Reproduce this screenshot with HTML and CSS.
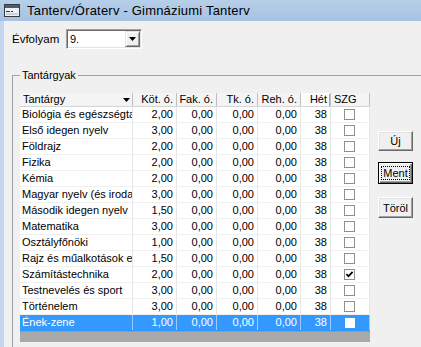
FILE: index.html
```html
<!DOCTYPE html>
<html lang="hu">
<head>
    <meta charset="UTF-8">
    <title>Tanterv/Óraterv - Gimnáziumi Tanterv</title>
    <link rel="stylesheet" href="styles.css">
</head>
<body>
<div class="titlebar">
    <svg class="app-icon" width="16" height="13" viewBox="0 0 16 13">
        <rect x="0.5" y="0.5" width="15" height="12" fill="#fff" stroke="#3a3a3a"/>
        <rect x="1" y="1" width="14" height="3" fill="#4a5a78"/>
        <rect x="1" y="4" width="14" height="8" fill="#eef1f5"/>
        <rect x="2" y="7" width="4" height="1" fill="#333"/>
        <rect x="7" y="7" width="2" height="1" fill="#333"/>
        <rect x="2" y="9" width="12" height="2" fill="#c9d3de"/>
    </svg>
    <span class="title">Tanterv/Óraterv - Gimnáziumi Tanterv</span>
</div>

<div class="client">
    <div class="year-row">
        <label class="year-label">Évfolyam</label>
        <div class="combo">
            <span class="combo-text">9.</span>
            <span class="combo-btn">
                <svg width="7" height="4" viewBox="0 0 7 4"><path d="M0 0h7L3.5 4z" fill="#000"/></svg>
            </span>
        </div>
    </div>

    <fieldset class="group">
        <legend>Tantárgyak</legend>
        <div class="group-body">
            <div class="grid">
                <div class="row head">
                    <div class="cell left">Tantárgy<svg class="sort" width="7" height="4" viewBox="0 0 7 4"><path d="M0 0h7L3.5 4z" fill="#000"/></svg></div>
                    <div class="cell">Köt. ó.</div>
                    <div class="cell">Fak. ó.</div>
                    <div class="cell">Tk. ó.</div>
                    <div class="cell">Reh. ó.</div>
                    <div class="cell hot">Hét</div>
                    <div class="cell left">SZG</div>
                </div>
                <div id="rows"></div>
                <div class="grid-footer"></div>
            </div>
            <div class="actions">
                <button class="btn btn-new">Új</button>
                <button class="btn btn-default"><span class="focus">Ment</span></button>
                <button class="btn btn-del">Töröl</button>
            </div>
        </div>
    </fieldset>
</div>

<script>
    var subjects = [
        ['Biológia és egészségtan', '2,00', false],
        ['Első idegen nyelv', '3,00', false],
        ['Földrajz', '2,00', false],
        ['Fizika', '2,00', false],
        ['Kémia', '2,00', false],
        ['Magyar nyelv (és irodalom)', '3,00', false],
        ['Második idegen nyelv', '1,50', false],
        ['Matematika', '3,00', false],
        ['Osztályfőnöki', '1,00', false],
        ['Rajz és műalkotások elemzése', '1,50', false],
        ['Számítástechnika', '2,00', true],
        ['Testnevelés és sport', '3,00', false],
        ['Történelem', '3,00', false],
        ['Ének-zene', '1,00', false]
    ];

    var html = '';
    subjects.forEach(function (s, i) {
        var cls = (i === subjects.length - 1) ? 'row selected' : 'row';
        var tick = s[2] ? '<svg width="9" height="9" viewBox="0 0 9 9"><path d="M1.5 4.2 3.5 6.3 7.6 1.8" fill="none" stroke="#000" stroke-width="1.8"/></svg>' : '';
        html += '<div class="' + cls + '">' +
            '<div class="cell left">' + s[0] + '</div>' +
            '<div class="cell">' + s[1] + '</div>' +
            '<div class="cell">0,00</div>' +
            '<div class="cell">0,00</div>' +
            '<div class="cell">0,00</div>' +
            '<div class="cell">38</div>' +
            '<div class="cell center"><span class="check">' + tick + '</span></div>' +
            '</div>';
    });
    document.getElementById('rows').innerHTML = html;
</script>
</body>
</html>
```

FILE: styles.css
```css
* {
    box-sizing: border-box;
}

body {
    margin: 0;
    width: 421px;
    height: 347px;
    overflow: hidden;
    background: #f0f0f0;
    font-family: 'Liberation Sans', Arial, sans-serif;
    font-size: 11px;
    color: #000;
}

.titlebar {
    height: 21px;
    display: flex;
    align-items: center;
    padding-left: 4px;
    background: linear-gradient(#b6cfea, #a6c2e3);
}

.app-icon {
    display: block;
    margin-right: 7px;
}

.title {
    font-size: 13px;
    letter-spacing: 0.2px;
    color: #000;
}

.client {
    height: 326px;
    border-left: 4px solid #c3d6ed;
    padding: 8px 0 0 8px;
}

.year-row {
    display: flex;
    align-items: center;
    height: 20px;
}

.year-label {
    width: 54px;
    font-size: 11.5px;
}

.combo {
    width: 76px;
    height: 20px;
    display: flex;
    align-items: center;
    padding: 2px 1px 2px 3px;
    background: #fff;
    border: 1px solid;
    border-color: #a0a0a0 #fff #fff #a0a0a0;
    box-shadow: inset 1px 1px #696969, inset -1px -1px #e3e3e3;
}

.combo-text {
    flex: 1;
}

.combo-btn {
    width: 15px;
    height: 16px;
    display: flex;
    align-items: center;
    justify-content: center;
    background: #f0f0f0;
    border: 1px solid;
    border-color: #e3e3e3 #696969 #696969 #e3e3e3;
    box-shadow: inset 1px 1px #fff, inset -1px -1px #a0a0a0;
}

/* group box runs past the window's right and bottom edge */
.group {
    margin: 19px 0 0 0;
    width: 409px;
    height: 279px;
    padding: 11px 0 0 7px;
    border: 1px solid #a0a0a0;
    border-right: none;
    border-bottom: none;
}

.group legend {
    padding: 0 2px;
    line-height: 14px;
}

.group-body {
    display: flex;
    align-items: flex-start;
}

.grid {
    width: 350px;
}

.row {
    display: grid;
    grid-template-columns: 113px 44px 40px 41px 43px 30px 39px;
    height: 16px;
    background: #fff;
    border-bottom: 1px solid #f0f0f0;
}

.cell {
    overflow: hidden;
    white-space: nowrap;
    padding: 0 3px 0 2px;
    text-align: right;
    line-height: 15px;
    border-right: 1px solid #e6e6e6;
}

.cell.left {
    text-align: left;
}

.cell.center {
    display: flex;
    align-items: center;
    justify-content: center;
}

.row.head {
    height: 14px;
    background: #f4f4f4;
    border-bottom: 1px solid #d5d5d5;
}

.row.head .cell {
    line-height: 13px;
    border-right: 1px solid #bfbfbf;
}

.row.head .cell.left {
    padding-left: 3px;
}

.row.head .hot {
    background: #fbfbfb;
    box-shadow: inset 1px 1px #fff, inset -1px 0 #a8a8a8;
}

.sort {
    float: right;
    margin-top: 5px;
    margin-right: -1px;
}

.check {
    width: 11px;
    height: 11px;
    display: flex;
    align-items: center;
    justify-content: center;
    background: #fff;
    border: 1px solid #8f8f8f;
}

.row.selected {
    background: #3399ff;
    color: #fff;
    border-bottom-color: #3399ff;
}

.row.selected .cell {
    border-right-color: #9ccbff;
}

.row.selected .check {
    border-color: #fff;
    width: 10px;
    height: 10px;
}

.grid-footer {
    height: 11px;
    background: #a9a9a9;
    border-top: 1px solid #9a9a9a;
}

.actions {
    display: flex;
    flex-direction: column;
    margin: 38px 0 0 8px;
}

.btn {
    width: 35px;
    height: 20px;
    padding: 0;
    font-family: inherit;
    font-size: 11px;
    color: #000;
    background: #f0f0f0;
    border: 1px solid;
    border-color: #fff #696969 #696969 #fff;
    box-shadow: inset -1px -1px #a0a0a0, inset 1px 1px #e3e3e3;
}

.btn-default {
    margin-top: 11px;
    height: 22px;
    border-color: #000;
    box-shadow: inset 1px 1px #fff, inset -1px -1px #696969, inset -2px -2px #a0a0a0;
}

.focus {
    display: inline-block;
    outline: 1px dotted #000;
    padding: 0 1px;
    line-height: 12px;
}

.btn-del {
    margin-top: 13px;
    height: 21px;
}
```
